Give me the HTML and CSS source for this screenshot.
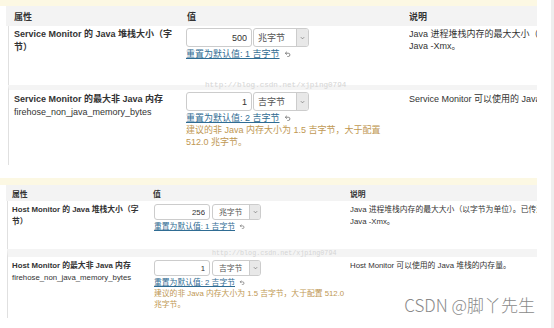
FILE: index.html
```html
<!DOCTYPE html>
<html lang="zh-CN">
<head>
    <meta charset="UTF-8">
    <meta name="viewport" content="width=device-width, initial-scale=1.0">
    <title>Service Monitor / Host Monitor 配置</title>
    <link rel="stylesheet" href="styles.css">
</head>
<body>

    <div class="page">
        <div class="shots">

            <!-- Service Monitor -->
            <section class="config large">
                <div class="notice"></div>
                <div class="head">
                    <div class="col-prop">属性</div>
                    <div class="col-val">值</div>
                    <div class="col-desc">说明</div>
                </div>

                <div class="row first">
                    <div class="col-prop">
                        <div class="name">Service Monitor 的 Java 堆栈大小（字节）</div>
                    </div>
                    <div class="col-val">
                        <div class="field">
                            <input class="num" type="text" value="500">
                            <div class="unit"><span>兆字节</span><i class="caret"><svg viewBox="0 0 6 4"><path d="M1 1l2 2 2-2"/></svg></i></div>
                        </div>
                        <div class="reset-line">
                            <a class="reset" href="#">重置为默认值: 1 吉字节</a>
                            <svg class="undo" viewBox="0 0 8 7"><path d="M1.5 2.6h3.4a1.9 1.9 0 0 1 0 3.8H3.8"/><path d="M3.2 0.9 1.5 2.6 3.2 4.3"/></svg>
                        </div>
                    </div>
                    <div class="col-desc">
                        <p>Java 进程堆栈内存的最大大小（以字节为单位）。已传递到 Java -Xmx。</p>
                    </div>
                </div>

                <div class="row second">
                    <div class="col-prop">
                        <div class="name">Service Monitor 的最大非 Java 内存</div>
                        <div class="key">firehose_non_java_memory_bytes</div>
                    </div>
                    <div class="col-val">
                        <div class="field">
                            <input class="num" type="text" value="1">
                            <div class="unit"><span>吉字节</span><i class="caret"><svg viewBox="0 0 6 4"><path d="M1 1l2 2 2-2"/></svg></i></div>
                        </div>
                        <div class="reset-line">
                            <a class="reset" href="#">重置为默认值: 2 吉字节</a>
                            <svg class="undo" viewBox="0 0 8 7"><path d="M1.5 2.6h3.4a1.9 1.9 0 0 1 0 3.8H3.8"/><path d="M3.2 0.9 1.5 2.6 3.2 4.3"/></svg>
                        </div>
                        <div class="warn">建议的非 Java 内存大小为 1.5 吉字节，大于配置 512.0 兆字节。</div>
                    </div>
                    <div class="col-desc">
                        <p>Service Monitor 可以使用的 Java 堆栈的内存量。</p>
                    </div>
                </div>

                <span class="mark">http://blog.csdn.net/xjping0794</span>
            </section>

            <!-- Host Monitor -->
            <section class="config small">
                <div class="notice"></div>
                <div class="head">
                    <div class="col-prop">属性</div>
                    <div class="col-val">值</div>
                    <div class="col-desc">说明</div>
                </div>

                <div class="row first">
                    <div class="col-prop">
                        <div class="name">Host Monitor 的 Java 堆栈大小（字节）</div>
                    </div>
                    <div class="col-val">
                        <div class="field">
                            <input class="num" type="text" value="256">
                            <div class="unit"><span>兆字节</span><i class="caret"><svg viewBox="0 0 6 4"><path d="M1 1l2 2 2-2"/></svg></i></div>
                        </div>
                        <div class="reset-line">
                            <a class="reset" href="#">重置为默认值: 1 吉字节</a>
                            <svg class="undo" viewBox="0 0 8 7"><path d="M1.5 2.6h3.4a1.9 1.9 0 0 1 0 3.8H3.8"/><path d="M3.2 0.9 1.5 2.6 3.2 4.3"/></svg>
                        </div>
                    </div>
                    <div class="col-desc">
                        <p>Java 进程堆栈内存的最大大小（以字节为单位）。已传递到 Java -Xmx。</p>
                    </div>
                </div>

                <div class="row second">
                    <div class="col-prop">
                        <div class="name">Host Monitor 的最大非 Java 内存</div>
                        <div class="key">firehose_non_java_memory_bytes</div>
                    </div>
                    <div class="col-val">
                        <div class="field">
                            <input class="num" type="text" value="1">
                            <div class="unit"><span>吉字节</span><i class="caret"><svg viewBox="0 0 6 4"><path d="M1 1l2 2 2-2"/></svg></i></div>
                        </div>
                        <div class="reset-line">
                            <a class="reset" href="#">重置为默认值: 2 吉字节</a>
                            <svg class="undo" viewBox="0 0 8 7"><path d="M1.5 2.6h3.4a1.9 1.9 0 0 1 0 3.8H3.8"/><path d="M3.2 0.9 1.5 2.6 3.2 4.3"/></svg>
                        </div>
                        <div class="warn">建议的非 Java 内存大小为 1.5 吉字节，大于配置 512.0 兆字节。</div>
                    </div>
                    <div class="col-desc">
                        <p>Host Monitor 可以使用的 Java 堆栈的内存量。</p>
                    </div>
                </div>

                <span class="mark">http://blog.csdn.net/xjping0794</span>
            </section>

        </div>
        <div class="scrollbar"></div>

        <div class="csdn">CSDN @脚丫先生</div>
    </div>

</body>
</html>
```

FILE: styles.css
```css
body {
    margin: 0;
    font-family: "Liberation Sans", "Noto Sans CJK SC", sans-serif;
    color: #333;
    background-color: #fff;
}

.page {
    position: relative;
    display: flex;
    height: 328px;
    overflow: hidden;
}

.shots {
    width: 537px;
}

.scrollbar {
    width: 3px;
    margin-left: 14px;
    background-color: #eeeeee;
}

/* one screenshot of the config table */
.config {
    position: relative;
    overflow: hidden;
}

.notice {
    background-color: #fcf8e3;
}

.head {
    display: grid;
    align-items: center;
    margin-left: 6px;
    background-color: #f3f3f3;
    font-weight: bold;
}

.row {
    display: grid;
    box-sizing: border-box;
    border-left: 1px solid #e0e0e0;
}

.row.second {
    border-top-style: solid;
    border-top-color: #f4f4f4;
}

.col-desc {
    overflow: hidden;
}

.col-desc p {
    margin: 0;
}

.name {
    font-weight: bold;
}

.field {
    display: flex;
    gap: 1px;
}

.num {
    box-sizing: border-box;
    margin: 0;
    padding: 0 4px;
    border: 1px solid #cccccc;
    border-radius: 3px;
    background-color: #fff;
    font-family: inherit;
    font-size: inherit;
    color: #333;
    text-align: right;
}

.unit {
    display: flex;
    box-sizing: border-box;
    border: 1px solid #cccccc;
    border-radius: 3px;
    background-color: #fff;
    color: #555;
    overflow: hidden;
}

.unit span {
    flex: 1;
    display: flex;
    align-items: center;
}

.caret {
    display: flex;
    align-items: center;
    justify-content: center;
    border-left: 1px solid #cccccc;
    background-color: #e8e8e8;
}

.caret svg {
    width: 5px;
    height: 4px;
    fill: none;
    stroke: #777;
    stroke-width: 0.9;
}

.reset-line {
    display: flex;
    align-items: center;
    gap: 4px;
}

.reset {
    color: #2f6c93;
    text-decoration: underline;
}

.undo {
    fill: none;
    stroke: #666;
    stroke-width: 0.9;
}

.warn {
    color: #c09853;
}

.mark {
    position: absolute;
    font-family: "Liberation Mono", monospace;
    line-height: 1;
    color: #d4d4d4;
    white-space: nowrap;
}

/* Service Monitor shot */
.large {
    font-size: 9px;
}

.large .notice {
    height: 6px;
}

.large .head {
    height: 20px;
    grid-template-columns: 180px 223px 1fr;
}

.large .head .col-prop {
    padding-left: 8px;
}

.large .head .col-val {
    padding-left: 1px;
}

.large .row {
    grid-template-columns: 177px 223px 1fr;
    margin-left: 8px;
    padding-top: 2px;
}

.large .row.first {
    height: 59px;
}

.large .row.second {
    height: 80px;
    border-top-width: 5px;
}

.large .row .col-prop {
    padding: 0 7px 0 5px;
    line-height: 12.5px;
}

.large .row.second .col-prop,
.large .row.second .col-desc {
    padding-top: 1px;
}

.large .row .col-val {
    padding-right: 10px;
    line-height: 12px;
}

.large .row .col-desc {
    line-height: 12px;
}

.large .col-desc p {
    width: 245px;
}

.large .num {
    width: 66px;
    height: 19px;
}

.large .unit {
    width: 56px;
    height: 19px;
}

.large .unit span {
    padding-left: 4px;
}

.large .caret {
    width: 11px;
}

.large .reset-line {
    margin-top: 1px;
}

.large .undo {
    width: 7px;
    height: 6px;
}

.large .mark {
    top: 82px;
    left: 205px;
    font-size: 7.6px;
}

/* Host Monitor shot */
.small {
    margin-top: 13px;
    font-size: 7.8px;
}

.small .notice {
    height: 7px;
}

.small .head {
    height: 16px;
    grid-template-columns: 147px 197px 1fr;
}

.small .head .col-prop {
    padding-left: 6px;
}

.small .row {
    grid-template-columns: 145px 197px 1fr;
    margin-left: 7px;
    padding-top: 3px;
}

.small .row.first {
    height: 48px;
}

.small .row.second {
    height: 69px;
    border-top-width: 8px;
}

.small .row .col-prop {
    padding: 0 13px 0 4px;
    line-height: 11.5px;
}

.small .row .col-val {
    padding-left: 1px;
    line-height: 11px;
}

.small .row .col-desc {
    line-height: 12px;
}

.small .col-desc p {
    width: 212px;
}

.small .num {
    width: 56px;
    height: 16px;
}

.small .unit {
    width: 49px;
    height: 16px;
    margin-left: 1px;
}

.small .unit span {
    padding-left: 6px;
}

.small .caret {
    width: 10px;
}

.small .reset-line {
    margin-top: 1px;
}

.small .undo {
    width: 6px;
    height: 5px;
}

.small .mark {
    top: 72px;
    left: 212px;
    font-size: 6.7px;
}

/* blog watermark in the corner */
.csdn {
    position: absolute;
    top: 296px;
    right: 19px;
    font-family: "Noto Sans CJK SC", sans-serif;
    font-weight: 300;
    font-size: 17px;
    line-height: 1;
    color: #8a8a8a;
}
```
